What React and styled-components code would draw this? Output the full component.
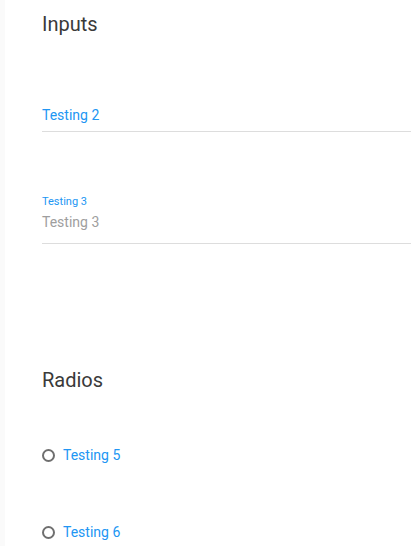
import React from "react";
import styled, { createGlobalStyle } from "styled-components";

const GlobalStyle = createGlobalStyle`
  html, body {
    margin: 0;
    padding: 0;
    background: #ffffff;
    font-family: Roboto, "Liberation Sans", sans-serif;
  }
`;

const Page = styled.div`
  display: flex;
  min-height: 546px;
  overflow: hidden;
`;

const Edge = styled.div`
  width: 5px;
  flex: none;
  background: #fafafa;
`;

const Content = styled.div`
  flex: 1;
  padding-left: 37px;
`;

const Section = styled.section`
  display: flex;
  flex-direction: column;
  margin-bottom: ${p => p.gap || 0}px;
`;

const Heading = styled.h2`
  margin: 12px 0 0;
  font-size: 20px;
  line-height: 24px;
  font-weight: 400;
  color: #3a3a3a;
`;

const Field = styled.div`
  display: flex;
  flex-direction: column;
  margin-top: ${p => p.top}px;
  border-bottom: 1px solid #dddddd;
  padding-bottom: ${p => p.pad}px;
`;

const FloatLabel = styled.label`
  font-size: 11px;
  line-height: 14px;
  color: #2196f3;
  margin-bottom: 4px;
`;

const Value = styled.div`
  font-size: 14px;
  line-height: 18px;
  color: ${p => (p.muted ? "#9e9e9e" : "#2196f3")};
`;

const RadioRow = styled.label`
  display: flex;
  align-items: center;
  gap: 8px;
  margin-top: ${p => p.top}px;
  font-size: 14px;
  line-height: 18px;
  color: #2196f3;
`;

const Circle = styled.span`
  width: 9px;
  height: 9px;
  border-radius: 50%;
  border: 2px solid #6f6f6f;
  flex: none;
`;

export default function App() {
  return (
    <>
      <GlobalStyle />
      <Page>
        <Edge />
        <Content>
          <Section gap={112}>
            <Heading>Inputs</Heading>
            <Field top={70} pad={7}>
              <Value>Testing 2</Value>
            </Field>
            <Field top={63} pad={12}>
              <FloatLabel>Testing 3</FloatLabel>
              <Value muted>Testing 3</Value>
            </Field>
          </Section>
          <Section>
            <Heading>Radios</Heading>
            <RadioRow top={54}>
              <Circle />
              Testing 5
            </RadioRow>
            <RadioRow top={59}>
              <Circle />
              Testing 6
            </RadioRow>
          </Section>
        </Content>
      </Page>
    </>
  );
}
